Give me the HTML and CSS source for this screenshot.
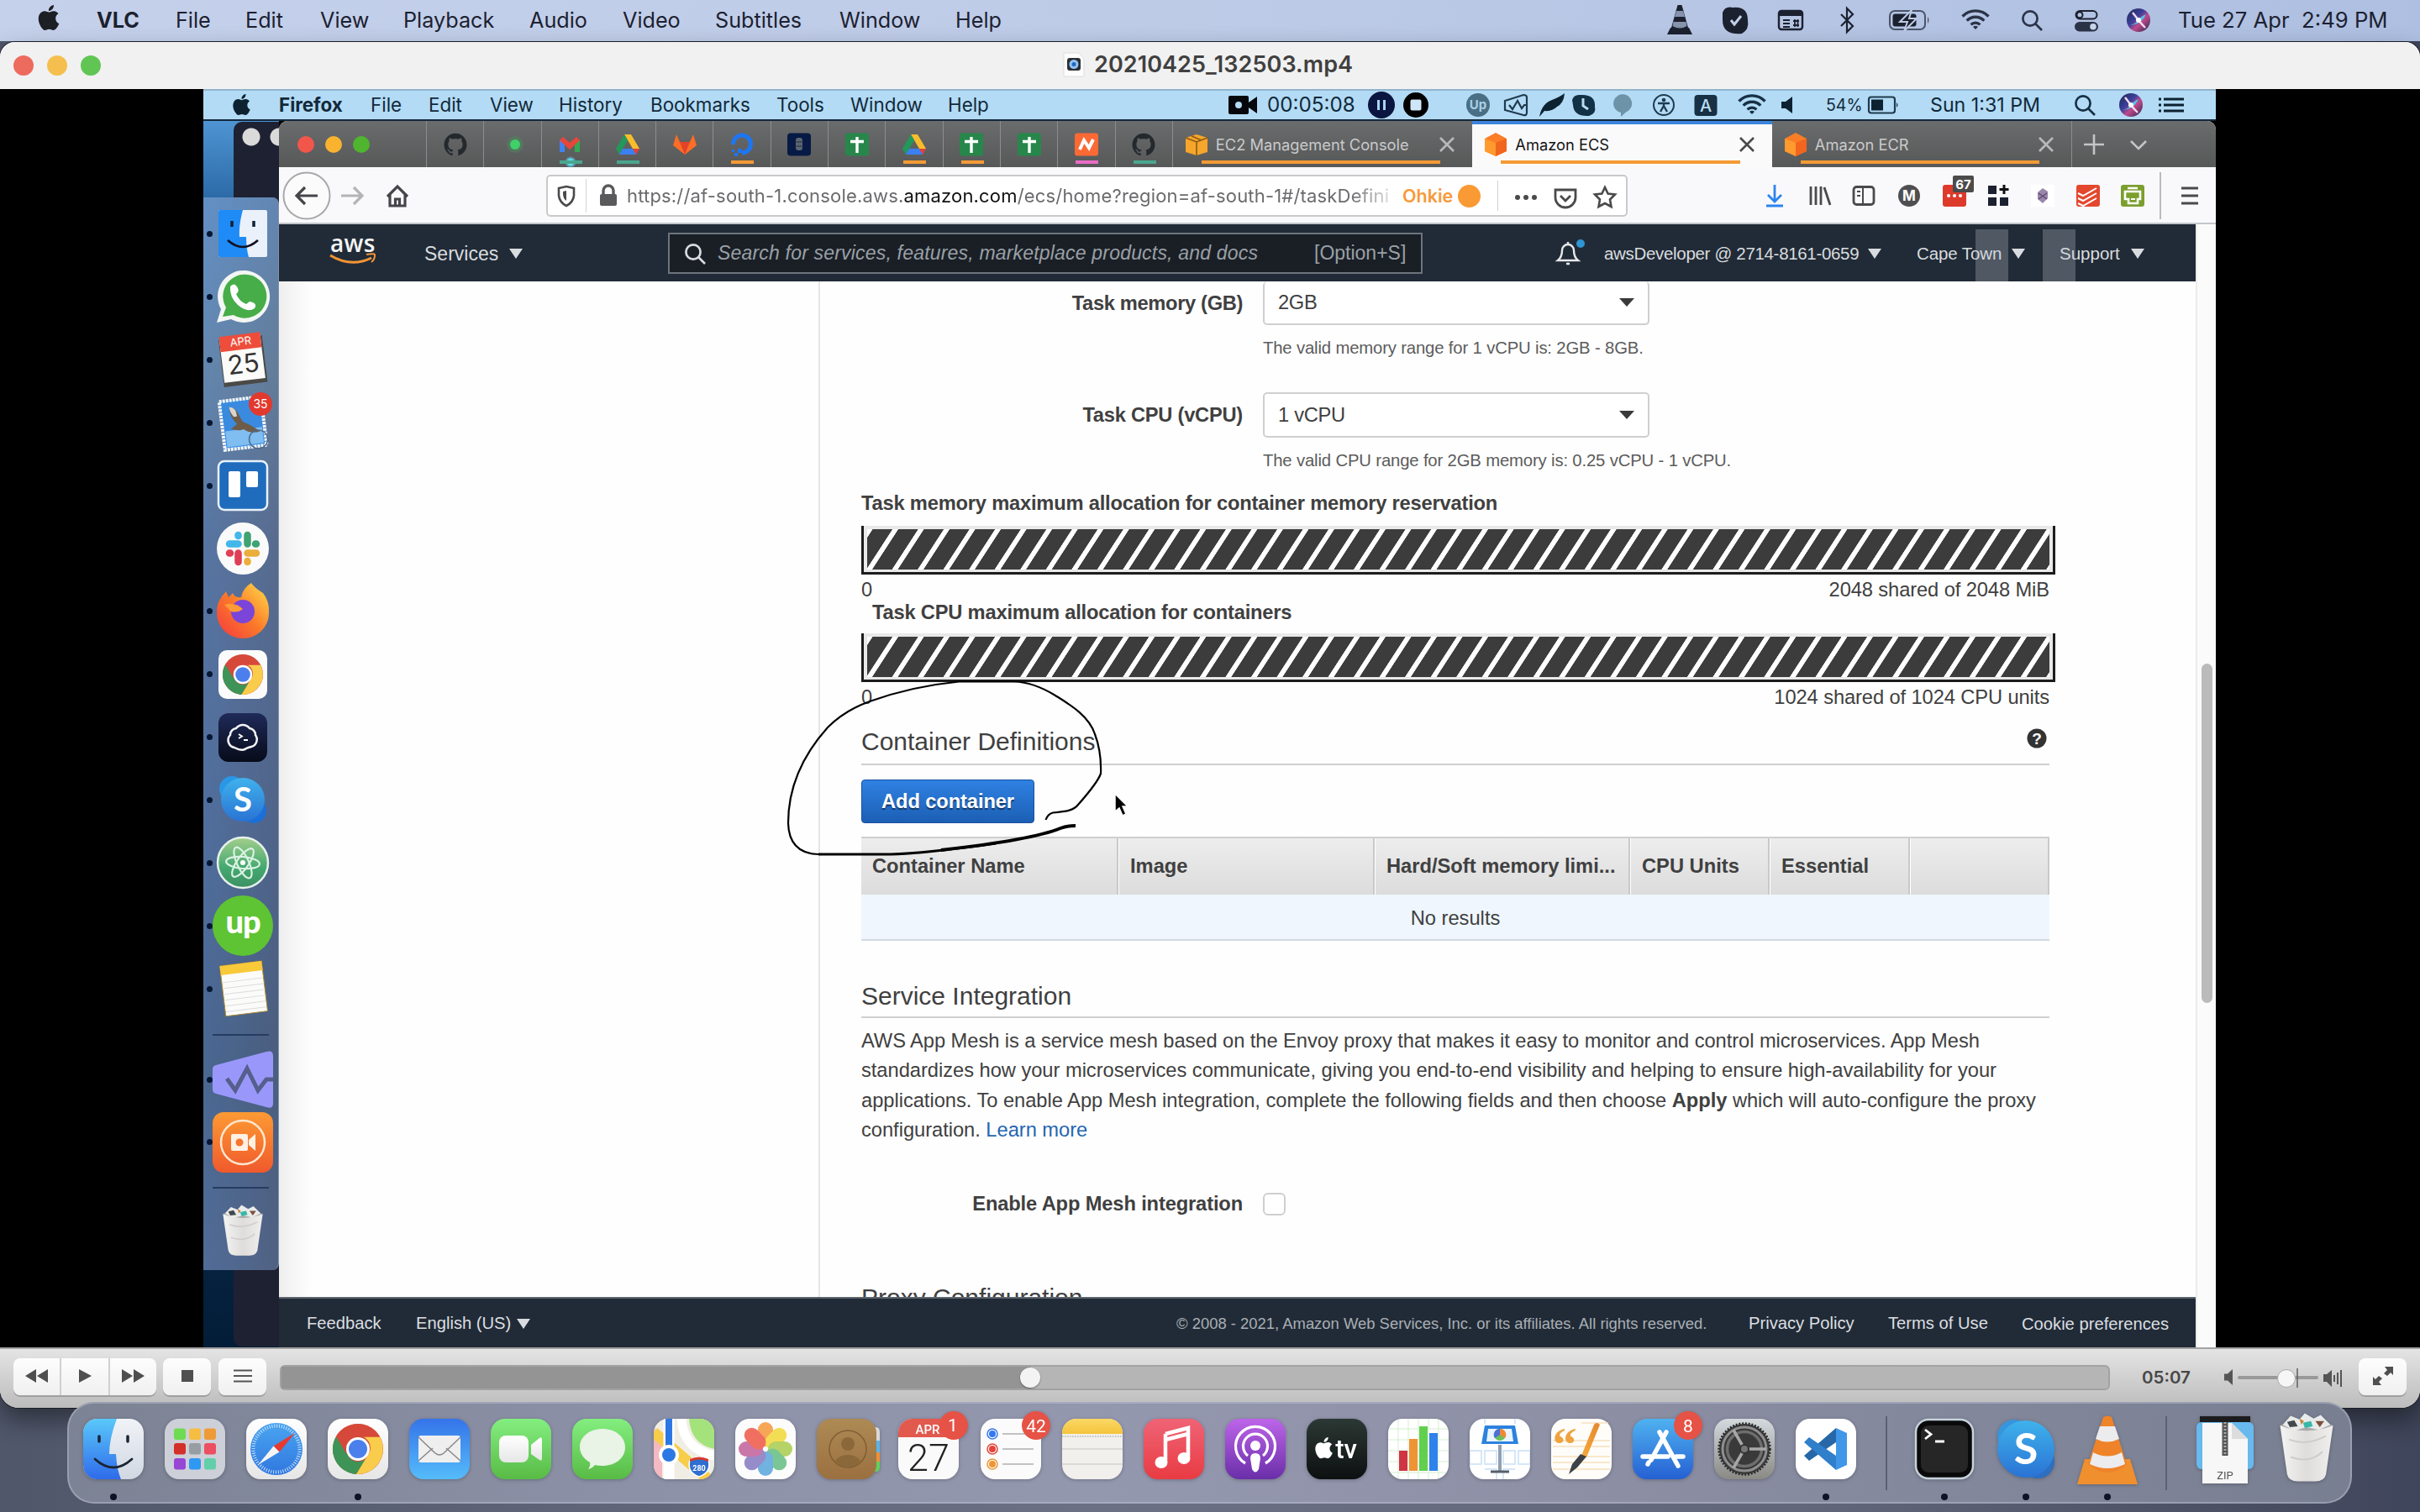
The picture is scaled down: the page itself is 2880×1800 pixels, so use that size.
FILE: index.html
```html
<!DOCTYPE html>
<html lang="en">
<head>
<meta charset="utf-8">
<title>20210425_132503.mp4</title>
<link rel="stylesheet" href="styles.css">
</head>
<body>
<svg class="defs" aria-hidden="true">
  <defs>
    <linearGradient id="gBlue" x1="0" y1="0" x2="0" y2="1"><stop offset="0" stop-color="#5ac8fa"/><stop offset="1" stop-color="#2f6bea"/></linearGradient>
    <linearGradient id="gMail" x1="0" y1="0" x2="0" y2="1"><stop offset="0" stop-color="#3574ea"/><stop offset="1" stop-color="#55bcfa"/></linearGradient>
    <linearGradient id="gSafari" x1="0" y1="0" x2="0" y2="1"><stop offset="0" stop-color="#4aa5f0"/><stop offset="1" stop-color="#3077e0"/></linearGradient>
    <linearGradient id="gGreen" x1="0" y1="0" x2="0" y2="1"><stop offset="0" stop-color="#83ee80"/><stop offset="1" stop-color="#58bb45"/></linearGradient>
    <linearGradient id="gWhite" x1="0" y1="0" x2="0" y2="1"><stop offset="0" stop-color="#fff"/><stop offset="1" stop-color="#e6e6e6"/></linearGradient>
    <linearGradient id="gSilver" x1="0" y1="0" x2="0" y2="1"><stop offset="0" stop-color="#f0f3f7"/><stop offset="1" stop-color="#d1d8e2"/></linearGradient>
    <linearGradient id="gBrown" x1="0" y1="0" x2="0" y2="1"><stop offset="0" stop-color="#ad8a54"/><stop offset="1" stop-color="#9b7040"/></linearGradient>
    <linearGradient id="gMusic" x1="0" y1="0" x2="0" y2="1"><stop offset="0" stop-color="#ef6475"/><stop offset="1" stop-color="#e93b43"/></linearGradient>
    <linearGradient id="gPod" x1="0" y1="0" x2="0" y2="1"><stop offset="0" stop-color="#bd65e9"/><stop offset="1" stop-color="#6a2ea9"/></linearGradient>
    <linearGradient id="gTv" x1="0" y1="0" x2="0" y2="1"><stop offset="0" stop-color="#2b3834"/><stop offset="1" stop-color="#0d1010"/></linearGradient>
    <linearGradient id="gStore" x1="0" y1="0" x2="0" y2="1"><stop offset="0" stop-color="#4fb2f0"/><stop offset="1" stop-color="#2560d3"/></linearGradient>
    <linearGradient id="gPref" x1="0" y1="0" x2="0" y2="1"><stop offset="0" stop-color="#d3dade"/><stop offset="1" stop-color="#8a8985"/></linearGradient>
    <linearGradient id="gSky" x1="0" y1="0" x2="0" y2="1"><stop offset="0" stop-color="#3fb2ec"/><stop offset="1" stop-color="#2a73d4"/></linearGradient>
    <linearGradient id="gOrange" x1="0" y1="0" x2="0" y2="1"><stop offset="0" stop-color="#fd9a33"/><stop offset="1" stop-color="#f0592c"/></linearGradient>
    <linearGradient id="gAtom" x1="0" y1="0" x2="0" y2="1"><stop offset="0" stop-color="#a3cf8c"/><stop offset=".6" stop-color="#44a870"/><stop offset="1" stop-color="#3c9063"/></linearGradient>
    <linearGradient id="gFox" x1="0" y1="1" x2="1" y2="0"><stop offset="0" stop-color="#f5373f"/><stop offset=".5" stop-color="#fb7a2a"/><stop offset="1" stop-color="#ffe24a"/></linearGradient>
    <linearGradient id="gTermius" x1="0" y1="0" x2="0" y2="1"><stop offset="0" stop-color="#1f2a58"/><stop offset="1" stop-color="#070b1a"/></linearGradient>
    <linearGradient id="gNotes" x1="0" y1="0" x2="0" y2="1"><stop offset="0" stop-color="#fbd865"/><stop offset="1" stop-color="#f4c43c"/></linearGradient>
    <linearGradient id="gPen" x1="1" y1="0" x2="0" y2="1"><stop offset="0" stop-color="#e8862a"/><stop offset="1" stop-color="#f5ab3c"/></linearGradient>
    <linearGradient id="gCan" x1="0" y1="0" x2="1" y2="0"><stop offset="0" stop-color="#f4f4f2"/><stop offset=".5" stop-color="#dedddb"/><stop offset="1" stop-color="#f0efed"/></linearGradient>
    <linearGradient id="gSiri" x1="0" y1="0" x2="1" y2="1"><stop offset="0" stop-color="#23264f"/><stop offset=".4" stop-color="#3a3f9a"/><stop offset=".6" stop-color="#c04a8c"/><stop offset="1" stop-color="#22264a"/></linearGradient>
    <clipPath id="cSq"><rect x="-36" y="-36" width="72" height="72" rx="17"/></clipPath>
    <clipPath id="cFlat"><rect x="-29" y="-28" width="58" height="56" rx="2"/></clipPath>

    <g id="apple"><path d="M12.152 6.896c-.948 0-2.415-1.078-3.96-1.04-2.04.027-3.91 1.183-4.961 3.014-2.117 3.675-.546 9.103 1.519 12.09 1.013 1.454 2.208 3.09 3.792 3.039 1.52-.065 2.09-.987 3.935-.987 1.831 0 2.35.987 3.96.948 1.637-.026 2.676-1.48 3.676-2.948 1.156-1.688 1.636-3.325 1.662-3.415-.039-.013-3.182-1.221-3.22-4.857-.026-3.04 2.48-4.494 2.597-4.559-1.429-2.09-3.623-2.324-4.39-2.376-2-.156-3.675 1.09-4.61 1.09zM15.53 3.83c.843-1.012 1.4-2.427 1.245-3.83-1.207.052-2.662.805-3.532 1.818-.78.896-1.454 2.338-1.273 3.714 1.338.104 2.715-.688 3.559-1.701"/></g>
    <g id="github" transform="translate(-13.5 -13.5) scale(1.125)"><path fill="#24292e" d="M12 .297c-6.63 0-12 5.373-12 12 0 5.303 3.438 9.8 8.205 11.385.6.113.82-.258.82-.577 0-.285-.01-1.04-.015-2.04-3.338.724-4.042-1.61-4.042-1.61C4.422 18.07 3.633 17.7 3.633 17.7c-1.087-.744.084-.729.084-.729 1.205.084 1.838 1.236 1.838 1.236 1.07 1.835 2.809 1.305 3.495.998.108-.776.417-1.305.76-1.605-2.665-.3-5.466-1.332-5.466-5.93 0-1.31.465-2.38 1.235-3.22-.135-.303-.54-1.523.105-3.176 0 0 1.005-.322 3.3 1.23.96-.267 1.98-.399 3-.405 1.02.006 2.04.138 3 .405 2.28-1.552 3.285-1.23 3.285-1.23.645 1.653.24 2.873.12 3.176.765.84 1.23 1.91 1.23 3.22 0 4.61-2.805 5.625-5.475 5.92.42.36.81 1.096.81 2.22 0 1.606-.015 2.896-.015 3.286 0 .315.21.69.825.57C20.565 22.092 24 17.592 24 12.297c0-6.627-5.373-12-12-12"/></g>
    <g id="wifi" fill="none" stroke="currentColor" stroke-width="3.4"><path d="M-15.500-4.500A21.500 21.500 0 0 1 15.500-4.500M-10.300.6A14.500 14.500 0 0 1 10.300.6M-5.400 5.400A7.600 7.600 0 0 1 5.400 5.400"/><path d="M-3 8 0 11 3 8A4 4 0 0 0-3 8Z" fill="currentColor" stroke="none"/></g>
    <g id="search" fill="none" stroke="currentColor" stroke-width="2.7"><circle cx="-2" cy="-2" r="8.600"/><path d="M4.500 4.500 12 12"/></g>
    <g id="siri"><circle r="14" fill="url(#gSiri)"/><path d="M-10 6Q-2 4 0 0T9-7Q4 5-10 6Z" fill="#54c3ee"/><path d="M-7-9Q-3-4 0 0T8 9" stroke="#f3dcf2" stroke-width="2.400" fill="none"/><circle r="3" fill="#fff"/></g>
    <g id="drive"><path d="M-4-12H4L14 5H6Z" fill="#f9bd2b"/><path d="M-4-12-14 5-10 12 0-5Z" fill="#23985a"/><path d="M-10 12H10L14 5H-6Z" fill="#3c7ff0"/><path d="M10 12 14 5H6Z" fill="#e44034"/></g>
    <g id="sheet"><rect x="-14" y="-13.500" width="28" height="27" rx="3" fill="#27874b"/><path d="M0-9V10M-8-3.500H8" stroke="#fff" stroke-width="3.400"/></g>
    <g id="cube"><path d="M-13-7 0-14 13-7V8L0 14-13 8Z" fill="#fb7d26"/><path d="M-13-7 0-2V14L-13 8Z" fill="#ff9a2e"/><path d="M0-2 13-7V8L0 14Z" fill="#f2651f"/></g>
    <g id="chrome"><circle r="30" fill="#d6483a"/><path d="M-26-15A30 30 0 0 0-2 30L12 7A13 13 0 0 1-12 7Z" fill="#3e9457"/><path d="M26-14.500A30 30 0 0 1-2 30L12 7A14 14 0 0 0 6-14.500Z" fill="#f9cd4b"/><path d="M-26-15-13 7A15 15 0 0 1 0-14.500H26A30 30 0 0 0-26-15Z" fill="#d6483a"/><circle r="14" fill="#fff"/><circle r="11" fill="#4b80ec"/></g>
    <g id="bin"><path d="M-30-26H30L22 30Q20 38 10 38H-10Q-20 38-22 30Z" fill="url(#gCan)"/><path d="M-30-26Q0-40 30-26 0-14-30-26Z" fill="#aaa"/><path d="M-27-27-18-37-8-33-2-40 8-34 16-38 27-27 14-21 0-24-14-20Z" fill="#e9ebea"/><path d="M-22-30-14-32-10-25-19-24Z" fill="#43494d"/><path d="M-4-29 5-31 7-25-2-23Z" fill="#36b8a8"/><path d="M10-31 20-31 15-24Z" fill="#7d4f3b"/><path d="M-8-34-3-31-6-27Z" fill="#c68238"/><path d="M-20-10Q0-2 22-14M-18 10Q4 18 18 4" stroke="#cfcdca" stroke-width="2" fill="none"/></g>
  </defs>
</svg>

<header class="menubar">
  <nav class="menubar-left">
    <svg class="apple-logo" viewBox="0 0 24 24"><use href="#apple"/></svg>
    <b>VLC</b><span>File</span><span>Edit</span><span>View</span><span>Playback</span><span>Audio</span><span>Video</span><span>Subtitles</span><span>Window</span><span>Help</span>
  </nav>
  <div class="menubar-right">
    <svg class="i" viewBox="-20 -20 40 40"><path d="M-11 9H11L15 17H-15Z" fill="#1c2130"/><path d="M-2.500-18H2.500L10 9H-10Z" fill="#1c2130"/><path d="M-4-11H4L6-4H-6ZM-7.500 2H7.500L8.500 7Q0 12-8.500 7Z" fill="#8793ad"/></svg>
    <svg class="i" viewBox="-20 -20 40 40"><path d="M-15-9Q-12-17-3-15 15-17 15 0 17 11 8 16-15 18-15 0Z"/><path d="M-5 0-1 5 7-5" fill="none" stroke="#c3d0e9" stroke-width="3"/></svg>
    <svg class="i" viewBox="-20 -20 40 40"><rect x="-14" y="-11" width="28" height="22" rx="3" fill="none" stroke="#1c2130" stroke-width="2.400"/><path d="M-14-11H14V-5H-14Z"/><path d="M-9 0H-1M-9 4H-1M-9 8H-1M3 1H10M3 6H10M5-1V8M8.500-1V8" stroke="#1c2130" stroke-width="1.800"/></svg>
    <svg class="i" viewBox="-20 -20 40 40"><path d="M-7-7 7 7 0 14V-14L7-7-7 7" fill="none" stroke="#1c2130" stroke-width="2.200"/></svg>
    <svg class="i i-wide" viewBox="-26 -20 52 40"><rect x="-22" y="-11" width="42" height="22" rx="6" fill="none" stroke="#4b5468" stroke-width="2"/><rect x="-18.500" y="-7.500" width="28" height="15" rx="3"/><path d="M23-4Q26 0 23 4Z" fill="#4b5468"/><path d="M4-12-10 2H-1L-5 13 10-2H1Z" stroke="#bccae4" stroke-width="2"/></svg>
    <svg class="i" viewBox="-20 -20 40 40"><use href="#wifi"/></svg>
    <svg class="i" viewBox="-20 -20 40 40"><use href="#search"/></svg>
    <svg class="i" viewBox="-20 -20 40 40"><rect x="-12.500" y="-11" width="25" height="9.500" rx="4.700" fill="none" stroke="#1c2130" stroke-width="2"/><circle cx="-8" cy="-6.200" r="3.500" fill="none" stroke="#1c2130" stroke-width="2"/><rect x="-14" y="2" width="28" height="11.500" rx="5.700" fill="#2b3347"/><circle cx="8" cy="7.700" r="3.800" fill="#c8d4ea"/></svg>
    <svg class="i" viewBox="-20 -20 40 40"><use href="#siri"/></svg>
    <span class="clock">Tue 27 Apr&nbsp; 2:49 PM</span>
  </div>
</header>

<main class="player">
  <div class="titlebar">
    <div class="lights"><i class="red"></i><i class="yellow"></i><i class="green"></i></div>
    <div class="title">
      <svg class="file-icon" viewBox="0 0 24 30"><path d="M0 1H18L24 8V29H0Z" fill="#fdfdfd" stroke="#ddd"/><rect x="4" y="7" width="16" height="15" rx="3" fill="#2b2e33"/><circle cx="12" cy="14.500" r="5.500" fill="#8fc4f3"/><circle cx="12" cy="14.500" r="2.500" fill="#2467c4"/></svg>
      <span>20210425_132503.mp4</span>
    </div>
  </div>

  <div class="stage">
    <div class="video">
      <div class="mac-bar">
        <nav class="mac-menus">
          <svg class="mac-apple" viewBox="0 0 24 24"><use href="#apple"/></svg>
          <b>Firefox</b><span>File</span><span>Edit</span><span>View</span><span>History</span><span>Bookmarks</span><span>Tools</span><span>Window</span><span>Help</span>
        </nav>
        <div class="mac-status">
          <svg class="i" viewBox="-20 -20 40 40"><rect x="-17" y="-11" width="24" height="22" rx="2" fill="#05070c"/><path d="M7-3 17-10V10L7 3Z" fill="#05070c"/><circle cx="-5" r="4" fill="#b5daf2"/></svg>
          <span class="rec">00:05:08</span>
          <svg class="i" viewBox="-20 -20 40 40"><circle r="16" fill="#0a1540"/><path d="M-3.500-6V6M3.500-6V6" stroke="#a8d4f3" stroke-width="3"/></svg>
          <svg class="i" viewBox="-20 -20 40 40"><circle r="15" fill="#000"/><rect x="-6.500" y="-6.500" width="13" height="13" rx="2" fill="#cfe6f6"/></svg>
          <svg class="i" viewBox="-20 -20 40 40"><circle r="14" fill="#4a6f85"/><text y="5" class="t-up">Up</text></svg>
          <svg class="i" viewBox="-20 -20 40 40"><g fill="none" stroke="#1f3a4f" stroke-width="2.200"><path d="M-13-5 9-12Q13-12 13-9V9Q13 13 9 12L-13 6Z"/><path d="M-8 0-4 5 2-5 7 4 10 0H13"/></g></svg>
          <svg class="i" viewBox="-20 -20 40 40"><path d="M-15 14Q-12-2 0-6 10-10 15-14 14-2 6 2 0 8-9 7Z" fill="#0c2231"/></svg>
          <svg class="i" viewBox="-20 -20 40 40"><path d="M-14-6Q-12-13-4-12 14-13 13 2 15 10 6 13-12 14-13 0Z" fill="#123046"/><path d="M-1-8V1L5 5" stroke="#b8dbf2" stroke-width="3" fill="none"/></svg>
          <svg class="i" viewBox="-20 -20 40 40"><path d="M-2 14V9A11 11 0 1 1 4 8.500Z" fill="#6d93a9"/></svg>
          <svg class="i" viewBox="-20 -20 40 40"><circle r="12" fill="none" stroke="#1f3a4f" stroke-width="2"/><circle cy="-6" r="2.300" fill="#1f3a4f"/><path d="M-7-2H7M0-2V2M0 1-4 8M0 1 4 8" stroke="#1f3a4f" stroke-width="2.400"/></svg>
          <svg class="i" viewBox="-20 -20 40 40"><rect x="-13.500" y="-12" width="27" height="25" rx="4" fill="#173044"/><text y="7.500" class="t-a">A</text></svg>
          <svg class="i ink" viewBox="-20 -20 40 40"><use href="#wifi"/></svg>
          <svg class="i" viewBox="-20 -20 40 40"><path d="M-8-4H-3L5-10V10L-3 4H-8Z" fill="#0c2231"/></svg>
          <span class="pct">54%</span>
          <svg class="i" viewBox="-20 -20 40 40"><rect x="-17" y="-9.500" width="31" height="19" rx="3" fill="none" stroke="#1f3a4f" stroke-width="2.200"/><rect x="-14" y="-6.500" width="14" height="13" fill="#0c2231"/><path d="M16-3Q19 0 16 3Z" fill="#1f3a4f"/></svg>
          <span class="mac-clock">Sun 1:31 PM</span>
          <svg class="i ink" viewBox="-20 -20 40 40"><use href="#search"/></svg>
          <svg class="i" viewBox="-20 -20 40 40"><use href="#siri"/></svg>
          <svg class="i" viewBox="-20 -20 40 40"><path d="M-9-7H15M-9 0H15M-9 7H15" stroke="#0c2231" stroke-width="3"/><path d="M-15-7H-12M-15 0H-12M-15 7H-12" stroke="#0c2231" stroke-width="3"/></svg>
        </div>
      </div>

      <div class="desk">
        <aside class="side">
          <div class="back-window"></div>
          <div class="side-dock">
            <div class="app on"><svg viewBox="-36 -36 72 72"><rect x="-29" y="-28" width="58" height="56" rx="2" fill="#eaf1fa"/><path clip-path="url(#cFlat)" d="M-36-28H0Q-5-10-4 4H4Q4 18 7 28H-36Z" fill="#1f8bf6"/><path d="M-13-15V-8M13-15V-8" stroke="#123" stroke-width="3.500"/><path d="M-18 8Q0 24 18 8" stroke="#112" stroke-width="2.600" fill="none"/></svg></div>
            <div class="app on"><svg viewBox="-36 -36 72 72"><path d="M-31 31-26 15A31 31 0 1 1-14 27Z" fill="#f3f6f3"/><path d="M-24 24-20 13A26 26 0 1 1-11 22Z" fill="#46ad48"/><path d="M-15-12Q-10-18-6-10-4-6-8-3-4 6 4 9L8 6Q18 8 14 14 6 20-6 10-16 1-15-12Z" fill="#fff"/></svg></div>
            <div class="app on"><svg viewBox="-36 -36 72 72"><g transform="rotate(-7)"><rect x="-26" y="-26" width="52" height="56" fill="#4a4a46"/><rect x="-25" y="-27" width="49" height="52" fill="#fbfbfa"/><rect x="-25" y="-30" width="49" height="18" fill="#ee4d3b"/><text y="-17" class="t-apr">APR</text><text y="16" class="t-25">25</text></g></svg></div>
            <div class="app on"><svg viewBox="-36 -36 72 72"><g transform="rotate(-7)"><rect x="-25" y="-28" width="50" height="58" fill="#3a8be0" stroke="#f5f7f8" stroke-width="4" stroke-dasharray="3 1"/><rect x="-22" y="-25" width="44" height="52" fill="#3a8be0"/><path d="M-22 8H22V27H-22Z" fill="#80bdf0"/><path d="M-14-20Q-6-20-3-8L0-1Q10 4 19 13 8 15 0 8-6 10-15 6-10 3-7 1-15-8-14-20Z" fill="#6e5c48"/><path d="M-14-20Q-6-20-6-8L-10-8Q-14-14-14-20Z" fill="#d8d5cf"/><circle cx="16" cy="22" r="11" fill="none" stroke="#4d6a8c" stroke-width="1.500"/></g><circle cx="21" cy="-22" r="14" fill="#e2392e"/><text x="21" y="-17" class="t-35">35</text></svg></div>
            <div class="app on"><svg viewBox="-36 -36 72 72"><rect x="-29" y="-29" width="58" height="58" rx="7" fill="#1f6cbd" stroke="#e8f1fa" stroke-width="2.500"/><rect x="-17" y="-17" width="14" height="31" rx="2" fill="#fff"/><rect x="4" y="-17" width="14" height="19" rx="2" fill="#fff"/></svg></div>
            <div class="app"><svg viewBox="-36 -36 72 72"><circle r="31" fill="#fafafa"/><g stroke-linecap="round" stroke-width="8.500"><path d="M-16-5.500H-5.500M-5.500-16V-15" stroke="#43b7ea"/><path d="M5.500-16V-5.500M16-5.500H15" stroke="#3fa373"/><path d="M16 5.500H5.500M5.500 16V15" stroke="#ebae3d"/><path d="M-5.500 16V5.500M-16 5.500H-15" stroke="#df3f56"/></g></svg></div>
            <div class="app on"><svg viewBox="-36 -36 72 72"><path d="M10-34Q14-28 24-22 32-12 31 2A31 30 0 0 1-31 2Q-32-12-20-24L-17-17-12-22Q-10-16-2-17 0-28 10-34Z" fill="url(#gFox)"/><circle cy="0" r="14" fill="#7a45d8"/><path d="M-22-8Q-10-12 0-3-6 2-14 0Z" fill="#fd9b36"/></svg></div>
            <div class="app on"><svg viewBox="-36 -36 72 72"><rect x="-29" y="-29" width="58" height="58" rx="10" fill="#fbfbfb"/><use href="#chrome" transform="scale(.8)"/></svg></div>
            <div class="app on"><svg viewBox="-36 -36 72 72"><rect x="-29" y="-29" width="58" height="58" rx="12" fill="url(#gTermius)"/><path d="M-10 12A9 9 0 0 1-15-3 8 8 0 0 1-8-11 10 10 0 0 1 8-11 8 8 0 0 1 15-3 9 9 0 0 1 10 11Q6 12 4 13 0 17-10 12Z" fill="none" stroke="#f4f4f8" stroke-width="2.500"/><path d="M-5-4-1-1.500-5 1M1 3H6" stroke="#fff" stroke-width="1.800" fill="none"/></svg></div>
            <div class="app on"><svg viewBox="-36 -36 72 72"><circle cx="-13" cy="-13" r="15" fill="#2a97e6"/><circle cx="13" cy="13" r="15" fill="#1b6fd8"/><circle r="26" fill="url(#gSky)"/><text y="14" class="t-skype">S</text></svg></div>
            <div class="app on"><svg viewBox="-36 -36 72 72"><circle r="30" fill="url(#gAtom)" stroke="#e6f1ea" stroke-width="2.500"/><g fill="none" stroke="#d9f2e2" stroke-width="2.200"><ellipse rx="20" ry="7" transform="rotate(5)"/><ellipse rx="20" ry="7" transform="rotate(65)"/><ellipse rx="20" ry="7" transform="rotate(125)"/></g><circle r="3" fill="#fff"/></svg></div>
            <div class="app on"><svg viewBox="-36 -36 72 72"><circle r="36" fill="#5ec433"/><text y="9" class="t-upwork">up</text></svg></div>
            <div class="app on"><svg viewBox="-36 -36 72 72"><g transform="rotate(-7)"><rect x="-24" y="-30" width="50" height="60" fill="#fbfbfa" stroke="#b08b2c"/><rect x="-24" y="-30" width="50" height="11" fill="#f8c939"/><path d="M-23-10H25M-23-3H25M-23 4H25M-23 11H25M-23 18H25M-23 25H25" stroke="#dcdcdc"/></g></svg></div>
            <div class="rule"></div>
            <div class="app on"><svg viewBox="-36 -36 72 72"><path d="M-36-12Q-36-16-32-17L28-33Q36-35 36-28V28Q36 36 28 33L-32 17Q-36 16-36 12Z" fill="#9a97fb"/><path d="M-19-1-9 13 5-13 18 13 28 0H36" fill="none" stroke="#555f8d" stroke-width="5"/></svg></div>
            <div class="app on"><svg viewBox="-36 -36 72 72"><rect x="-36" y="-36" width="72" height="72" rx="13" fill="url(#gOrange)"/><circle r="26" fill="none" stroke="#ffe7cf" stroke-width="2.500"/><rect x="-14" y="-10" width="20" height="20" rx="2" fill="#fff1e4"/><path d="M7-3 15-10V10L7 3Z" fill="#fff1e4"/><circle cx="-4" r="4.500" fill="#f8752f"/></svg></div>
            <div class="rule"></div>
            <div class="app"><svg viewBox="-40 -42 80 84"><use href="#bin" transform="translate(0 -3) scale(.92 .9)"/></svg></div>
          </div>
        </aside>

        <section class="browser">
          <div class="tabs">
            <div class="lights small"><i class="red"></i><i class="yellow"></i><i class="green"></i></div>
            <div class="pin"><svg class="i" viewBox="-20 -20 40 40"><use href="#github"/></svg></div>
            <div class="pin"><svg class="i" viewBox="-20 -20 40 40"><circle cx="3" r="10" fill="#4c8a5e" opacity=".5"/><circle cx="3" r="6" fill="#3fd068"/></svg></div>
            <div class="pin teal spark"><svg class="i" viewBox="-20 -20 40 40"><path d="M-9 9V-6" stroke="#4182ee" stroke-width="6"/><path d="M9 9V-6" stroke="#34a853" stroke-width="6"/><path d="M-10-7 0 2 10-7" fill="none" stroke="#e8463a" stroke-width="6"/></svg></div>
            <div class="pin teal"><svg class="i" viewBox="-20 -20 40 40"><use href="#drive"/></svg></div>
            <div class="pin"><svg class="i" viewBox="-20 -20 40 40"><path d="M-14 1-10-12-6-3H6L10-12 14 1 0 12Z" fill="#fc6d26"/><path d="M-6-3H6L0 12Z" fill="#e2432a"/></svg></div>
            <div class="pin amber"><svg class="i" viewBox="-20 -20 40 40"><path d="M0 10A10.500 10.500 0 1 0-10.500 0" fill="none" stroke="#1d76f2" stroke-width="5"/><path d="M-5 5H0V10H-5ZM-9 10H-5V14H-9ZM-12 6H-9V9H-12Z" fill="#1d76f2"/></svg></div>
            <div class="pin"><svg class="i" viewBox="-20 -20 40 40"><rect x="-14" y="-13.500" width="28" height="27" rx="4" fill="#071a45"/><rect x="-4" y="-8" width="8" height="15" rx="3" fill="#5d6670"/><path d="M-5-3H5M-5 2H5" stroke="#222c44"/></svg></div>
            <div class="pin"><svg class="i" viewBox="-20 -20 40 40"><use href="#sheet"/></svg></div>
            <div class="pin amber"><svg class="i" viewBox="-20 -20 40 40"><use href="#drive"/></svg></div>
            <div class="pin amber"><svg class="i" viewBox="-20 -20 40 40"><use href="#sheet"/></svg></div>
            <div class="pin"><svg class="i" viewBox="-20 -20 40 40"><use href="#sheet"/></svg></div>
            <div class="pin pink"><svg class="i" viewBox="-20 -20 40 40"><rect x="-14" y="-13.500" width="28" height="27" rx="3" fill="#fb6a35"/><path d="M-8 6-3-5 3 4 8-6" fill="none" stroke="#fff" stroke-width="4"/></svg></div>
            <div class="pin teal"><svg class="i" viewBox="-20 -20 40 40"><use href="#github"/></svg></div>
            <div class="tab"><svg class="i" viewBox="-20 -20 40 40"><path d="M-13-8 0-12 13-8V9L0 13-13 9Z" fill="#f5a62b"/><path d="M-13-8 0-3 13-8M0-3V13M-6-10 6-5" stroke="#8d5a14" stroke-width="1.600" fill="none"/></svg><span>EC2 Management Console</span><svg class="i x" viewBox="-20 -20 40 40"><path d="M-8-8 8 8M8-8-8 8"/></svg></div>
            <div class="tab current"><svg class="i" viewBox="-20 -20 40 40"><use href="#cube"/></svg><span>Amazon ECS</span><svg class="i x" viewBox="-20 -20 40 40"><path d="M-8-8 8 8M8-8-8 8"/></svg></div>
            <div class="tab"><svg class="i" viewBox="-20 -20 40 40"><use href="#cube"/></svg><span>Amazon ECR</span><svg class="i x" viewBox="-20 -20 40 40"><path d="M-8-8 8 8M8-8-8 8"/></svg></div>
            <div class="tab-tools"><svg class="i" viewBox="-20 -20 40 40"><path d="M-12 0H12M0-12V12"/></svg><svg class="i" viewBox="-20 -20 40 40"><path d="M-9-4 0 5 9-4"/></svg></div>
          </div>

          <div class="toolbar">
            <div class="nav-buttons">
              <svg viewBox="-30 -30 60 60" class="nb"><circle r="27.500" fill="#fbfbfc" stroke="#a9a9ab" stroke-width="2"/><path d="M13 0H-11M-2-10-12 0-2 10" class="ln"/></svg>
              <svg viewBox="-30 -30 60 60" class="nb"><path d="M-13 0H11M2-10 12 0 2 10" class="ln dim"/></svg>
              <svg viewBox="-30 -30 60 60" class="nb"><path d="M-12 1 0-11 12 1M-9-1V12H9V-1M-2.500 12V4H2.500V12" class="ln"/></svg>
            </div>
            <div class="urlbar">
              <svg class="i shield" viewBox="-20 -20 40 40"><path d="M0-11 9-9V0Q8 8 0 12-8 8-9 0V-9Z" fill="none" stroke="#4a4a4c" stroke-width="2.600"/><path d="M0-6V6Q-4 3-4-2V-5Z" fill="#4a4a4c"/></svg>
              <svg class="i lock" viewBox="-20 -20 40 40"><rect x="-10" y="-2" width="20" height="14" rx="2" fill="#5a5a5c"/><path d="M-6-2V-6A6 6 0 0 1 6-6V-2" fill="none" stroke="#5a5a5c" stroke-width="3.400"/></svg>
              <span class="url">https://af-south-1.console.aws.<em>amazon.com</em>/ecs/home?region=af-south-1#/taskDefini</span>
              <span class="container-name">Ohkie</span><i class="container-dot"></i>
              <div class="url-tools">
                <svg class="i" viewBox="-20 -20 40 40"><circle cx="-10" r="3"/><circle r="3"/><circle cx="10" r="3"/></svg>
                <svg class="i" viewBox="-20 -20 40 40"><path d="M-12-9H12V0A12 12 0 0 1-12 0Z" fill="none" stroke="#4a4a4c" stroke-width="2.800"/><path d="M-6-2 0 4 6-2" fill="none" stroke="#4a4a4c" stroke-width="2.800"/></svg>
                <svg class="i" viewBox="-20 -20 40 40"><path d="M0-12 3.600-4.500 12-3.500 6 2.500 7.500 11 0 7-7.500 11-6 2.500-12-3.500-3.600-4.500Z" fill="none" stroke="#4a4a4c" stroke-width="2.600"/></svg>
              </div>
            </div>
            <div class="extensions">
              <svg class="i" viewBox="-20 -20 40 40"><path d="M0-13V6M-8-1 0 7 8-1M-10 12H10" fill="none" stroke="#2b84ef" stroke-width="2.800"/></svg>
              <svg class="i" viewBox="-20 -20 40 40"><path d="M-11-11V11M-5-11V11M1-11V11M5-10 12 11" stroke="#4a4a4c" stroke-width="2.800"/></svg>
              <svg class="i" viewBox="-20 -20 40 40"><rect x="-12" y="-10.500" width="24" height="21" rx="3.500" fill="none" stroke="#4a4a4c" stroke-width="2.800"/><path d="M-1-10V10M-8-5H-4M-8 0H-4" stroke="#4a4a4c" stroke-width="2"/></svg>
              <svg class="i" viewBox="-20 -20 40 40"><circle r="13" fill="#4f4f51"/><text y="6" class="t-m">M</text></svg>
              <svg class="i" viewBox="-20 -20 40 40"><rect x="-14" y="-13" width="28" height="26" rx="3" fill="#dd3a2b"/><circle cx="-7" r="2" fill="#fff"/><circle r="2" fill="#fff"/><circle cx="7" r="2" fill="#fff"/><rect x="-2" y="-24" width="25" height="20" rx="2" fill="#4b4b4b"/><text x="10.500" y="-8" class="t-67">67</text></svg>
              <svg class="i" viewBox="-20 -20 40 40"><rect x="-12" y="-12" width="10" height="10"/><rect x="-12" y="2" width="10" height="10"/><rect x="2" y="2" width="10" height="10"/><path d="M7-13V-2M1.500-7.500H12.500" stroke="#111" stroke-width="3"/></svg>
              <svg class="i" viewBox="-20 -20 40 40"><rect x="-14" y="-13" width="28" height="26" fill="#fff"/><path d="M0-9 6-5V3L0 9-6 4V-4Z" fill="#9a86ab"/><path d="M-5-3 5 4M5-3-5 4" stroke="#5f4c70" stroke-width="1.500"/></svg>
              <svg class="i" viewBox="-20 -20 40 40"><rect x="-14" y="-13" width="28" height="26" rx="3" fill="#e3472e"/><path d="M-12-3-6 0 10-9M-12 3-6 6 10-3M-12 9-6 12 10 3" stroke="#fff" stroke-width="2" fill="none"/></svg>
              <svg class="i" viewBox="-20 -20 40 40"><rect x="-14" y="-13" width="28" height="26" rx="3" fill="#7c9f2e"/><path d="M-9-5V4H-5V9H6V4H9V-5ZM-6-9H6" fill="none" stroke="#fff" stroke-width="2.600"/><path d="M-2 4H3" stroke="#fff" stroke-width="2"/></svg>
              <i class="vr"></i>
              <svg class="i" viewBox="-20 -20 40 40"><path d="M-10-9H10M-10 0H10M-10 9H10" stroke="#4a4a4c" stroke-width="2.800"/></svg>
            </div>
          </div>

          <div class="page">
            <div class="page-main">
              <div class="aws-nav">
                <div class="aws-logo"><span>aws</span><svg viewBox="0 0 56 14"><path d="M1 2Q26 17 50 5" fill="none" stroke="#f29436" stroke-width="3"/><path d="M44 1Q55-1 54 2 54 7 50 10" fill="none" stroke="#f29436" stroke-width="2"/></svg></div>
                <span class="services">Services</span><i class="tri"></i>
                <div class="aws-search">
                  <svg class="i" viewBox="-20 -20 40 40"><use href="#search"/></svg>
                  <span class="ph">Search for services, features, marketplace products, and docs</span>
                  <span class="kbd">[Option+S]</span>
                </div>
                <svg class="i bell" viewBox="-20 -20 40 40"><path d="M-12 8Q-7 4-7-4A7 7 0 0 1 7-4Q7 4 12 8ZM0-11V-14M-2 12H2" fill="none" stroke="#e6e8ea" stroke-width="2.400"/><circle cx="15" cy="-12" r="5" fill="#2f95d3"/></svg>
                <span class="account">awsDeveloper @ 2714-8161-0659</span><i class="tri"></i>
                <span class="region">Cape Town</span><i class="tri"></i>
                <span class="support">Support</span><i class="tri"></i>
                <div class="paused"><i></i><i></i></div>
              </div>

              <div class="content">
                <div class="form">
                  <div class="field first"><label>Task memory (GB)</label><div class="select">2GB<i class="caret"></i></div></div>
                  <p class="hint">The valid memory range for 1 vCPU is: 2GB - 8GB.</p>
                  <div class="field second"><label>Task CPU (vCPU)</label><div class="select">1 vCPU<i class="caret"></i></div></div>
                  <p class="hint">The valid CPU range for 2GB memory is: 0.25 vCPU - 1 vCPU.</p>

                  <div class="alloc-title">Task memory maximum allocation for container memory reservation</div>
                  <div class="alloc"><div></div></div>
                  <div class="alloc-legend"><span>0</span><span>2048 shared of 2048 MiB</span></div>
                  <div class="alloc-title inset">Task CPU maximum allocation for containers</div>
                  <div class="alloc"><div></div></div>
                  <div class="alloc-legend"><span>0</span><span>1024 shared of 1024 CPU units</span></div>

                  <h2 class="defs-title">Container Definitions <svg class="help" viewBox="-12 -12 24 24"><circle r="11.500" fill="#333"/><text y="7" class="t-help">?</text></svg></h2>
                  <button class="add">Add container</button>
                  <div class="table">
                    <div class="thead"><span>Container Name</span><span>Image</span><span>Hard/Soft memory limi...</span><span>CPU Units</span><span>Essential</span><span></span></div>
                    <div class="empty">No results</div>
                  </div>

                  <h2 class="service-title">Service Integration</h2>
                  <p class="copy"><span class="lead">AWS App Mesh is a service mesh based on the Envoy proxy that makes it easy to monitor and control microservices. App Mesh</span><br>standardizes how your microservices communicate, giving you end-to-end visibility and helping to ensure high-availability for your<br>applications. To enable App Mesh integration, complete the following fields and then choose <b>Apply</b> which will auto-configure the proxy<br>configuration. <a>Learn more</a></p>
                  <div class="field mesh"><label>Enable App Mesh integration</label><i class="checkbox"></i></div>
                  <h2 class="proxy-title">Proxy Configuration</h2>
                </div>
                <svg class="ink-note" viewBox="920 790 440 240"><path d="M1244.500 976Q1247 969 1253 967.500C1268 966 1278 965 1283 958Q1306 932 1310 921 1311 895 1303 874C1296 852 1272 838 1256 828Q1230 812 1207 811.500H1141Q1085 817 1035 835C1010 844 996 855 985 866 950 905 938 945 938 980Q939 1016 974 1017H1060" fill="none" stroke="#000" stroke-width="2.200"/><path d="M974 1017H1060Q1100 1016 1185 1004" fill="none" stroke="#000" stroke-width="3"/><path d="M1120 1012C1200 1003 1240 995 1262 986Q1270 983 1280 983" fill="none" stroke="#000" stroke-width="4"/><path d="M1327 945V966L1332 962 1336 971 1340 969 1336 960H1342Z" fill="#000" stroke="#fff" stroke-width="1.500"/></svg>
              </div>

              <footer class="aws-foot">
                <span class="f1">Feedback</span><span class="f2">English (US)</span><i class="tri"></i>
                <span class="f3">© 2008 - 2021, Amazon Web Services, Inc. or its affiliates. All rights reserved.</span>
                <span class="f4">Privacy Policy</span><span class="f5">Terms of Use</span><span class="f6">Cookie preferences</span>
              </footer>
            </div>
            <div class="scroll"><i></i></div>
          </div>
        </section>
      </div>
    </div>
  </div>

  <div class="controls">
    <div class="btn-group">
      <button class="btn"><svg class="i" viewBox="-20 -20 40 40"><path d="M-14 0-1-8V8ZM0 0 13-8V8Z"/></svg></button>
      <button class="btn"><svg class="i" viewBox="-20 -20 40 40"><path d="M-7-8 8 0-7 8Z"/></svg></button>
      <button class="btn"><svg class="i" viewBox="-20 -20 40 40"><path d="M14 0 1-8V8ZM0 0-13-8V8Z"/></svg></button>
    </div>
    <button class="btn solo"><svg class="i" viewBox="-20 -20 40 40"><rect x="-7" y="-7" width="14" height="14"/></svg></button>
    <button class="btn solo"><svg class="i" viewBox="-20 -20 40 40"><path d="M-11-6.500H11M-11 0H11M-11 6.500H11" stroke="#555" stroke-width="2.200"/></svg></button>
    <div class="seek"><i class="played"></i><i class="knob"></i></div>
    <span class="time">05:07</span>
    <svg class="volume" viewBox="2646 1616 144 48"><path d="M2646 1635.500H2650L2656 1630V1649L2650 1643.500H2646Z"/><path d="M2664 1640H2756" stroke="#999" stroke-width="4" stroke-linecap="round"/><path d="M2733 1629V1652" stroke="#666" stroke-width="1.600"/><circle cx="2720" cy="1641" r="10.500" fill="#f6f6f6" stroke="#aaa"/><path d="M2764 1636H2768L2774 1631V1651L2768 1645H2764Z"/><path d="M2777 1637V1645M2781 1634V1648M2785 1631V1651" stroke="#555" stroke-width="2"/></svg>
    <button class="btn solo full"><svg class="i" viewBox="-20 -20 40 40"><path d="M1-3 5-7 2-11H12V-1L9-4 5 0ZM-1 3-5 7-2 11H-12V1L-9 4-5 0Z"/></svg></button>
  </div>
</main>

<div class="dock">
  <div class="d on"><svg viewBox="-36 -36 72 72"><rect x="-36" y="-36" width="72" height="72" rx="17" fill="url(#gSilver)"/><path clip-path="url(#cSq)" d="M-36-36H4Q-5-12-5 6H3Q4 24 9 36H-36Z" fill="url(#gBlue)"/><path d="M-17-15V-9M17-15V-9" stroke="#1b2533" stroke-width="3.500" stroke-linecap="round"/><path d="M-22 12Q0 32 22 12" stroke="#1b2533" stroke-width="2.800" fill="none" stroke-linecap="round"/></svg></div>
  <div class="d"><svg viewBox="-36 -36 72 72"><rect x="-36" y="-36" width="72" height="72" rx="17" fill="#cdd0d8"/><rect x="-25" y="-24.500" width="14" height="13.500" rx="3" fill="#6edb50"/><rect x="-7" y="-24.500" width="14" height="13.500" rx="3" fill="#f5bd42"/><rect x="11" y="-24.500" width="14" height="13.500" rx="3" fill="#ee9a36"/><rect x="-25" y="-7" width="14" height="13.500" rx="3" fill="#d4302a"/><rect x="-7" y="-7" width="14" height="13.500" rx="3" fill="#969ea3"/><rect x="11" y="-7" width="14" height="13.500" rx="3" fill="#ec4f61"/><rect x="-25" y="11" width="14" height="13.500" rx="3" fill="#9746d6"/><rect x="-7" y="11" width="14" height="13.500" rx="3" fill="#2f98f3"/><rect x="11" y="11" width="14" height="13.500" rx="3" fill="#63cfaa"/></svg></div>
  <div class="d"><svg viewBox="-36 -36 72 72"><rect x="-36" y="-36" width="72" height="72" rx="17" fill="url(#gWhite)"/><circle r="31" fill="url(#gSafari)"/><circle r="27.500" fill="none" stroke="#dcecfb" stroke-width="4" stroke-dasharray=".9 1.980"/><path d="M22-19 3.500 3.500-3.500-3.500Z" fill="#e8392f"/><path d="M-22 19-3.500-3.500 3.500 3.500Z" fill="#f4f4f4"/></svg></div>
  <div class="d on"><svg viewBox="-36 -36 72 72"><rect x="-36" y="-36" width="72" height="72" rx="17" fill="url(#gWhite)"/><use href="#chrome"/></svg></div>
  <div class="d"><svg viewBox="-36 -36 72 72"><rect x="-36" y="-36" width="72" height="72" rx="17" fill="url(#gMail)"/><rect x="-25" y="-16" width="50" height="32" rx="3" fill="#efeff0"/><path d="M-25 14-8-1M25 14 8-1M-25-14-5 5Q0 9 5 5L25-14" fill="none" stroke="#888" stroke-width="1.500"/></svg></div>
  <div class="d"><svg viewBox="-36 -36 72 72"><rect x="-36" y="-36" width="72" height="72" rx="17" fill="url(#gGreen)"/><rect x="-26" y="-16" width="35" height="32" rx="8" fill="url(#gWhite)"/><path d="M12-5 22-13Q25-15 25-11V11Q25 15 22 13L12 6Z" fill="url(#gWhite)"/></svg></div>
  <div class="d"><svg viewBox="-36 -36 72 72"><rect x="-36" y="-36" width="72" height="72" rx="17" fill="url(#gGreen)"/><path d="M0-24C15-24 27-15 27-2S15 20 0 20Q-5 20-9 19-12 23-17 24-14 20-15 16C-22 12-27 5-27-2-27-15-15-24 0-24Z" fill="#e9f3e6"/></svg></div>
  <div class="d"><svg viewBox="-36 -36 72 72"><g clip-path="url(#cSq)"><rect x="-36" y="-36" width="72" height="72" fill="#f0eee4"/><path d="M6-36H36V0Q8-6 6-36Z" fill="#a4e37c"/><path d="M-3-36Q-1 0 36 8" fill="none" stroke="#fff" stroke-width="11"/><path d="M-36-26-26-14V36H-36Z" fill="#f4b9c2"/><path d="M-36-20 36 42" stroke="#f8cd4a" stroke-width="13"/><path d="M-18 0V36" stroke="#fff" stroke-width="13"/><path d="M-18-36V2" stroke="#fff" stroke-width="13"/><path d="M-18-36V2" stroke="#2b78e4" stroke-width="8"/></g><circle cx="-18" cy="7" r="12" fill="#fff"/><circle cx="-18" cy="7" r="8" fill="#2b78e4"/><path d="M7 13Q18 6 29 13 33 28 18 33 3 28 7 13Z" fill="#2e6fd0" stroke="#fff" stroke-width="1.500"/><path d="M7 15Q18 10 29 15V12Q18 7 7 12Z" fill="#d8392e"/><text x="18" y="26" class="t-280">280</text></svg></div>
  <div class="d"><svg viewBox="-36 -36 72 72"><rect x="-36" y="-36" width="72" height="72" rx="17" fill="#fcfcfc"/><g opacity=".85"><rect x="-9" y="-32" width="18" height="29" rx="9" fill="#f5983a"/><rect x="-9" y="-32" width="18" height="29" rx="9" fill="#f2d838" transform="rotate(45)"/><rect x="-9" y="-32" width="18" height="29" rx="9" fill="#a9cd4c" transform="rotate(90)"/><rect x="-9" y="-32" width="18" height="29" rx="9" fill="#64bd83" transform="rotate(135)"/><rect x="-9" y="-32" width="18" height="29" rx="9" fill="#5aa6dc" transform="rotate(180)"/><rect x="-9" y="-32" width="18" height="29" rx="9" fill="#8579c2" transform="rotate(225)"/><rect x="-9" y="-32" width="18" height="29" rx="9" fill="#c25f9a" transform="rotate(270)"/><rect x="-9" y="-32" width="18" height="29" rx="9" fill="#ee5747" transform="rotate(315)"/></g></svg></div>
  <div class="d"><svg viewBox="-36 -36 72 72"><path d="M30-26H34Q39-26 39-20V-10H30Z" fill="#d9d9d9"/><path d="M30-10H39V4H30Z" fill="#5ab4ea"/><path d="M30 4H39V15H30Z" fill="#ef9137"/><path d="M30 15H39V22Q39 27 34 27H30Z" fill="#63cf5b"/><rect x="-36" y="-36" width="71" height="72" rx="17" fill="url(#gBrown)"/><circle cx="1" r="22" fill="none" stroke="#7f5f33" stroke-width="1.500"/><circle cx="1" cy="-6" r="8" fill="#8a6839"/><path d="M-14 14Q-9 7 1 7T16 14Q9 22 1 22T-14 14Z" fill="#8a6839"/></svg></div>
  <div class="d"><svg viewBox="-36 -36 72 72"><rect x="-36" y="-36" width="72" height="72" rx="17" fill="#fafafa"/><path clip-path="url(#cSq)" d="M-36-36H36V-14H-36Z" fill="#e2594e"/><text x="-1" y="-18.500" class="t-apr2">APR</text><text y="26" class="t-27">27</text><circle cx="30" cy="-28" r="17" fill="#e65245"/><text x="29" y="-21" class="t-badge">1</text></svg></div>
  <div class="d"><svg viewBox="-36 -36 72 72"><rect x="-36" y="-36" width="72" height="72" rx="17" fill="#fbfbfb"/><path d="M-10-18H27M-10 0H27M-10 18H27" stroke="#c2c2c2" stroke-width="2"/><g fill="#3478f0"><circle cx="-22" cy="-18" r="4"/><circle cx="-22" cy="-18" r="6" fill="none" stroke="#3478f0" stroke-width="1.500"/></g><g fill="#e4443a"><circle cx="-22" r="4"/><circle cx="-22" r="6" fill="none" stroke="#e4443a" stroke-width="1.500"/></g><g fill="#ee9634"><circle cx="-22" cy="18" r="4"/><circle cx="-22" cy="18" r="6" fill="none" stroke="#ee9634" stroke-width="1.500"/></g><circle cx="30" cy="-28" r="17" fill="#e65245"/><text x="30" y="-20.500" class="t-badge">42</text></svg></div>
  <div class="d"><svg viewBox="-36 -36 72 72"><rect x="-36" y="-36" width="72" height="72" rx="17" fill="#f1f0ed"/><path clip-path="url(#cSq)" d="M-36-36H36V-18H-36Z" fill="url(#gNotes)"/><path d="M-36-15H36" stroke="#b5b3ae" stroke-width="1.500" stroke-dasharray="1.500 1.500"/><path d="M-36 0H36M-36 18H36" stroke="#d4d2ce" stroke-width="1.500"/></svg></div>
  <div class="d"><svg viewBox="-36 -36 72 72"><rect x="-36" y="-36" width="72" height="72" rx="17" fill="url(#gMusic)"/><path d="M-10-18 17-25V9M-10-18V15M-10-11 17-18" fill="none" stroke="#fff" stroke-width="4.500"/><ellipse cx="-15" cy="16" rx="7.500" ry="7" fill="#fff"/><ellipse cx="12" cy="11" rx="7.500" ry="7" fill="#fff"/></svg></div>
  <div class="d"><svg viewBox="-36 -36 72 72"><rect x="-36" y="-36" width="72" height="72" rx="17" fill="url(#gPod)"/><path d="M-12 17A23.500 23.500 0 1 1 12 17M-9 8A14.500 14.500 0 1 1 9 8" fill="none" stroke="#fff" stroke-width="3.200"/><circle cy="-4" r="6" fill="#fff"/><path d="M-6 11Q-6 5 0 5T6 11L4 24Q0 31-4 24Z" fill="#fff"/></svg></div>
  <div class="d"><svg viewBox="-36 -36 72 72"><rect x="-36" y="-36" width="72" height="72" rx="17" fill="url(#gTv)"/><use href="#apple" fill="#fff" transform="translate(-28 -14) scale(1.050)"/><text x="11" y="11" class="t-tv">tv</text></svg></div>
  <div class="d"><svg viewBox="-36 -36 72 72"><rect x="-36" y="-36" width="72" height="72" rx="17" fill="#fff"/><path clip-path="url(#cSq)" d="M-36-24H36M-36-11H36M-36 2H36M-36 15H36M-36 28H36M-24-36V36M-12-36V36M0-36V36M12-36V36M24-36V36" stroke="#d3efd0"/><path d="M-23 2H-13V26H-23Z" fill="#cf3543"/><path d="M-11-12H-1V26H-11Z" fill="#ef9434"/><path d="M1-27H11V26H1Z" fill="#62d04e"/><path d="M13-19H23V26H13Z" fill="#2f82ec"/></svg></div>
  <div class="d"><svg viewBox="-36 -36 72 72"><rect x="-36" y="-36" width="72" height="72" rx="17" fill="#fff"/><path clip-path="url(#cSq)" d="M-18 2H-4V18H-18ZM4 2H18V18H4ZM-36 2H-22V18H-36ZM22 2H36V18H22ZM-18 24H-4V36M18 24H4V36M-18-36V-30M18-36V-30" fill="none" stroke="#c8e0f6" stroke-width="1.500"/><path d="M-18-28H18L22-6H-22Z" fill="#2c82de"/><path d="M-14-24H14L16-9H-16Z" fill="#eaf4fd"/><circle cy="-17" r="7" fill="#6bbf58"/><path d="M0-17V-24A7 7 0 0 1 6-13Z" fill="#ef8836"/><path d="M0-17V-24A7 7 0 0 0-6-13Z" fill="#4c6fd8"/><path d="M0-5V27" stroke="#92a0b0" stroke-width="4"/><path d="M-11 27H11" stroke="#555e6a" stroke-width="3"/></svg></div>
  <div class="d"><svg viewBox="-36 -36 72 72"><rect x="-36" y="-36" width="72" height="72" rx="17" fill="#fefdfa"/><path d="M0-31H32M-34-10H34M-34-3H34M-34 9H34M-34 16H34M-34 24H34" stroke="#f7dfbd" stroke-width="1.500"/><text x="-20" y="14" class="t-quote">“</text><path d="M15-29Q18-33 22-29L6 10 0 8Z" fill="url(#gPen)"/><path d="M-1 6 6 9-5 22-15 30-11 18Z" fill="#3d4246"/></svg></div>
  <div class="d"><svg viewBox="-36 -36 72 72"><rect x="-36" y="-36" width="72" height="72" rx="17" fill="url(#gStore)"/><path d="M4-20-14 13M-4-20 18 20M-24 9H6M16 9H24M-18 18-17 16" stroke="#fff" stroke-width="5.500" stroke-linecap="round"/><circle cx="30" cy="-28" r="17" fill="#e65245"/><text x="30" y="-20.500" class="t-badge">8</text></svg></div>
  <div class="d"><svg viewBox="-36 -36 72 72"><rect x="-36" y="-36" width="72" height="72" rx="17" fill="url(#gPref)"/><circle r="30" fill="#3a3a3a"/><circle r="30.500" fill="none" stroke="#2a2a2a" stroke-width="2.500" stroke-dasharray="2 1.800"/><circle r="26" fill="none" stroke="#8f8f8f" stroke-width="3"/><circle r="20.500" fill="none" stroke="#6e6e6e" stroke-width="3.500"/><path d="M0 0H26M0 0-13-22.500M0 0-13 22.500" stroke="#a8a8a8" stroke-width="3.500"/><circle r="5" fill="#777" stroke="#333" stroke-width="2"/></svg></div>
  <div class="d on"><svg viewBox="-36 -36 72 72"><rect x="-36" y="-36" width="72" height="72" rx="17" fill="#fff"/><path d="M12-25-26 8-20 14 12-8Z" fill="#2767a8"/><path d="M12 25-26-8-20-14 12 8Z" fill="#2f7fcb"/><path d="M12-25 25-19V19L12 25Z" fill="#4097e8"/></svg></div>
  <i class="sep"></i>
  <div class="d on"><svg viewBox="-36 -36 72 72"><rect x="-34" y="-35" width="68" height="70" rx="15" fill="#0a0a0a" stroke="#c5d3dc" stroke-width="2.500"/><rect x="-28" y="-28" width="56" height="56" rx="9" fill="#262626"/><path d="M-23-23-16-17.500-23-12M-11-9H0" fill="none" stroke="#fff" stroke-width="2.800"/></svg></div>
  <div class="d on"><svg viewBox="-36 -36 72 72"><circle cx="-14" cy="-15" r="20" fill="#3795dd"/><circle cx="14" cy="15" r="20" fill="#2d6fc0"/><circle r="34" fill="url(#gSky)"/><text y="18" class="t-skype big">S</text></svg></div>
  <div class="d on"><svg viewBox="-36 -36 72 72"><path d="M-27 12H27L36 42H-36Z" fill="#f08f2d"/><path d="M-5-38Q0-41 5-38L23 18Q0 38-23 18Z" fill="#ef8329"/><path d="M-9-27H9L14-12Q0-5-14-12ZM-17 4Q0 13 17 4L21 18Q0 28-21 18Z" fill="#ececee"/></svg></div>
  <i class="sep narrow"></i>
  <div class="d"><svg viewBox="-36 -36 72 72"><rect x="-34" y="-32" width="68" height="56" rx="6" fill="#67b9ee"/><path d="M-30-39H30V-32H-30Z" fill="#1c1c1e"/><path d="M-27-31H8L27-12V41H-27Z" fill="#f7f7f7"/><path d="M8-31V-12H27Z" fill="#dcdcdc"/><path d="M0-32V8" stroke="#555" stroke-width="7"/><path d="M0-32V8" stroke="#aaa" stroke-width="3" stroke-dasharray="2 2"/><text y="36" class="t-zip">ZIP</text></svg></div>
  <div class="d"><svg viewBox="-36 -36 72 72"><use href="#bin" transform="translate(0 -1) scale(1.050 1.040)"/></svg></div>
</div>
</body>
</html>
```
FILE: styles.css
```css
* { box-sizing: border-box; }
html, body { margin: 0; }
body {
  width: 2880px;
  height: 1800px;
  overflow: hidden;
  display: flex;
  flex-direction: column;
  font-family: Inter, "Liberation Sans", sans-serif;
  color: #1c2130;
  background: linear-gradient(90deg, #50576b, #6c7084 45%, #62667b 75%, #3f455a);
}
p, h2 { margin: 0; font-weight: 400; }
button { border: 0; padding: 0; font: inherit; }
svg { display: block; overflow: visible; }
svg text { text-anchor: middle; }
.defs { position: absolute; width: 0; height: 0; }
.i { width: 40px; height: 40px; flex: none; color: #2b3347; fill: #1c2130; }
.i-wide { width: 52px; }

/* system menu bar */
.menubar {
  flex: none;
  height: 49px;
  display: flex;
  justify-content: space-between;
  padding-bottom: 2px;
  background: linear-gradient(90deg, #c5d1eb, #bdcbe7 50%, #aebfe1);
  font-size: 25.200px;
  white-space: nowrap;
}
.menubar-left {
  display: grid;
  align-items: center;
  grid-template-columns: 72px 94px 83px 89px 99px 150px 111px 110px 148px 138px 80px;
  padding-left: 43px;
}
.apple-logo { width: 30px; height: 30px; margin-top: -5px; fill: #1c1f24; }
.menubar-right {
  display: grid;
  align-items: center;
  grid-template-columns: 66px 65.5px 67px 67.5px 86px 67px 65px 62px 67px 288px;
}
.clock { font-size: 25.700px; }

/* player window */
.player {
  flex: none;
  margin-top: 1px;
  height: 1626px;
  display: flex;
  flex-direction: column;
  border-radius: 18px 18px 22px 22px;
  overflow: hidden;
  background: #f1f1f1;
  box-shadow: 0 0 0 1px #1a1d25, 0 14px 30px rgba(0, 0, 0, .45);
}
.titlebar { flex: none; height: 56px; display: grid; grid-template-columns: 1278px auto; align-items: center; padding-bottom: 1px; background: #f1f1f1; }
.lights { display: flex; gap: 16px; padding-left: 16px; }
.lights i { width: 24px; height: 24px; border-radius: 50%; }
.lights .red { background: #ed6a5e; }
.lights .yellow { background: #f5bf4f; }
.lights .green { background: #61c554; }
.title { display: flex; align-items: center; justify-self: start; margin-left: -12px; margin-bottom: 2px; gap: 12px; font-size: 27px; letter-spacing: .07px; font-weight: 600; color: #404040; }
.file-icon { width: 24px; height: 30px; }

.stage { flex: none; height: 1498px; padding-left: 242px; background: #000; }
.video { width: 2395px; height: 1498px; display: flex; flex-direction: column; overflow: hidden; }
.mac-bar {
  flex: none;
  height: 38px;
  display: flex;
  align-items: center;
  padding-bottom: 1px;
  background: #b3dbf5;
  border-top: 2px solid #8fb4ce;
  border-bottom: 2px solid #14283a;
  font-size: 22.400px;
  color: #12293a;
  white-space: nowrap;
}
.mac-menus { display: grid; align-items: center; width: 1217px; padding-left: 33px; grid-template-columns: 57px 109px 69px 73px 82px 109px 150px 88px 116px 60px; }
.mac-apple { width: 25px; height: 25px; fill: #0c2231; }
.mac-status {
  display: grid;
  align-items: center;
  grid-template-columns: 49px 116px 41px 74px 45px 43px 38px 46px 49px 50px 55px 43px 65px 48px 76px 164px 55px 48px 40px;
}
.mac-status .ink { color: #173044; }
.rec { font-size: 24.200px; }
.pct { font-size: 19.500px; }
.mac-clock { font-size: 23.200px; }

.desk { flex: 1; display: flex; }
.side {
  flex: none;
  position: relative;
  width: 90px;
  padding-top: 91px;
  background: linear-gradient(180deg, #4f94d3, #2c6ba8 90px, #294a70 300px, #06233f 1350px, #031d38);
}
.back-window {
  position: absolute;
  left: 36px; top: 1px; right: 0; bottom: 1px;
  background: radial-gradient(circle at 21px 18px, #dadada 10px, transparent 11px), radial-gradient(circle at 54px 18px, #dadada 10px, transparent 11px), #1e2132;
  border-radius: 10px 0 0 10px;
}
.side-dock {
  position: relative;
  height: 1277px;
  padding-top: 6px;
  border-radius: 0 8px 8px 0;
  border-right: 1px solid #8291ad;
  background: linear-gradient(90deg, rgba(70, 120, 190, .25), rgba(70, 80, 110, .25)), linear-gradient(180deg, #6c98c8, #6d8ba8 16%, #5d7499 32%, #536a91 60%, #4b6283 80%, #54688a);
}
.app { height: 74.900px; display: flex; align-items: center; padding-left: 11px; position: relative; }
.app svg { width: 72px; height: 72px; }
.app.on::before { content: ""; position: absolute; left: 4px; top: 34px; width: 7px; height: 7px; border-radius: 50%; background: #061733; }
.side-dock .rule { height: 2px; width: 67px; margin: 16px 0 15px 11px; background: #263c61; }

/* browser */
.browser { flex: none; width: 2305px; display: flex; flex-direction: column; border-radius: 10px 10px 0 0; overflow: hidden; background: #fbfbfc; }
.tabs { flex: none; height: 55px; display: flex; background: linear-gradient(180deg, #6a6c6d, #575858); }
.tabs .lights { flex: none; width: 176px; padding-left: 22px; gap: 13px; align-items: center; border-right: 1px solid #8c8d8e; }
.tabs .lights i { width: 20px; height: 20px; }
.lights.small .red { background: #f2564a; }
.lights.small .yellow { background: #f9b32f; }
.lights.small .green { background: #4fb52f; }
.pin { position: relative; flex: none; width: 68.300px; display: flex; align-items: center; justify-content: center; border-right: 1px solid #8c8d8e; }
.pin::after, .tab::after { content: ""; position: absolute; bottom: 4px; height: 4px; }
.pin::after { left: 21px; width: 27px; }
.pin.teal::after { background: #4aa68f; }
.pin.amber::after, .tab::after { background: #f49a35; }
.pin.pink::after { background: #ea6cc4; }
.pin.spark::before { content: ""; position: absolute; left: 27px; bottom: -1px; width: 14px; height: 14px; border-radius: 50%; background: radial-gradient(#5fe6fb 30%, transparent 72%); }
.tab { position: relative; flex: none; width: 356.500px; display: grid; grid-template-columns: 43px 1fr 50px; align-items: center; padding-left: 8px; font-size: 18.300px; color: #c9cacb; white-space: nowrap; }
.tab::after { left: 34px; right: 38px; }
.tab .x { fill: none; stroke: #b8b9ba; stroke-width: 2.600; }
.tab.current { background: #fafafb; color: #141416; border-top: 4px solid #3c84dd; padding-bottom: 4px; }
.tab.current .x { stroke: #4a4a4c; }
.tab-tools { flex: 1; display: flex; gap: 13px; align-items: center; padding-left: 6px; border-left: 1px solid #8c8d8e; }
.tab-tools .i { fill: none; stroke: #c4c5c6; stroke-width: 2.600; }

.toolbar { flex: none; height: 68px; display: flex; align-items: center; padding-top: 2px; background: #f9f9fb; border-bottom: 2px solid #c3c6ca; }
.nav-buttons { flex: none; width: 318px; display: grid; grid-template-columns: 54px 54px 60px; padding-left: 3px; }
.nb { width: 60px; height: 60px; }
.ln { fill: none; stroke: #46464a; stroke-width: 3.200; }
.ln.dim { stroke: #b4b4b6; }
.urlbar { flex: none; width: 1287px; height: 50px; display: flex; align-items: center; border: 2px solid #c9c9cb; border-radius: 5px; background: #fff; font-size: 22px; color: #6b6b6e; white-space: nowrap; }
.shield { margin-left: 2px; margin-right: 3px; }
.lock { border-left: 1px solid #d5d5d7; width: 49px; padding-left: 4px; }
.url { flex: none; width: 906px; overflow: hidden; letter-spacing: .180px; -webkit-mask-image: linear-gradient(90deg, #000 95%, rgba(0, 0, 0, .25)); mask-image: linear-gradient(90deg, #000 95%, rgba(0, 0, 0, .25)); }
.url em { font-style: normal; color: #111; }
.container-name { width: 66px; margin-left: 17px; font-weight: 600; font-size: 21.500px; color: #f79a3a; }
.container-dot { width: 27px; height: 27px; border-radius: 50%; background: #f99a35; }
.url-tools { margin-left: 20px; padding-left: 13px; height: 36px; align-items: center; border-left: 1px solid #d0d0d2; display: grid; grid-template-columns: 47px 47px 40px; }
.url-tools .i { fill: #4a4a4c; }
.extensions { display: grid; align-items: center; padding-left: 155px; grid-template-columns: 54px 52px 54px 54px 52px 53px 54px 53px 52px 16px 40px; }
.vr { width: 2px; height: 56px; background: #b9babc; }

.page { flex: 1; display: flex; min-height: 0; font-family: "Liberation Sans", Arial, sans-serif; }
.page-main { flex: none; width: 2281px; display: flex; flex-direction: column; }
.scroll { flex: 1; background: #fbfbfb; border-left: 2px solid #ececec; padding: 523px 4px 0 5px; border-radius: 0 0 8px 0; }
.scroll i { display: block; height: 404px; border-radius: 7px; background: #bbb; }
.aws-nav { position: relative; flex: none; height: 68px; display: flex; align-items: center; padding-top: 2px; background: #212b37; color: #d9dcdf; font-size: 20.500px; white-space: nowrap; }
.aws-logo { flex: none; width: 173px; padding-left: 60px; font-family: "Open Sans", sans-serif; font-weight: 600; font-size: 28px; line-height: 24px; color: #f3f4f5; margin-top: -11px; }
.aws-logo span { display: block; padding-left: 1px; height: 25px; letter-spacing: .3px; }
.aws-logo svg { width: 56px; height: 14px; }
.tri { flex: none; width: 0; height: 0; border: 8px solid transparent; border-top: 12px solid #d9dcdf; border-bottom: 0; }
.services { width: 101px; font-size: 23px; }
.aws-search { flex: none; width: 898px; height: 49px; margin-left: 173px; margin-top: -1px; display: flex; align-items: center; background: #1a1f26; border: 2px solid #6d747b; padding-left: 10px; }
.aws-search .i { color: #d9dcdf; }
.ph { width: 710px; margin-left: 7px; font-style: italic; font-size: 23px; letter-spacing: .190px; color: #9aa0a6; }
.kbd { font-size: 23px; color: #9aa0a6; }
.bell { margin-left: 153px; margin-right: 23px; }
.account { width: 314px; letter-spacing: -.320px; }
.region { width: 113px; margin-left: 42px; letter-spacing: -.100px; }
.support { width: 85px; margin-left: 41px; }
.paused { position: absolute; left: 2019px; top: 6px; bottom: 0; display: flex; gap: 41px; }
.paused i { width: 39px; background: rgba(200, 205, 215, .28); }

.content {
  position: relative;
  flex: none;
  height: 1209px;
  overflow: hidden;
  padding-left: 642px;
  background: linear-gradient(90deg, #eee, #f6f6f6 18px, #fefefe 40px, #fefefe);
}
.form { height: 1230px; padding-left: 49px; border-left: 2px solid #e6e6e6; width: 1466px; font-size: 23.700px; color: #404040; white-space: nowrap; }
.field { display: grid; grid-template-columns: 454px 460px; column-gap: 24px; align-items: center; }
.field label { text-align: right; font-weight: 700; letter-spacing: -.100px; }
.first label { letter-spacing: -.350px; }
.second label { letter-spacing: -.250px; }
.select { height: 54px; display: flex; align-items: center; justify-content: space-between; border: 2px solid #cfcfcf; border-radius: 5px; padding: 0 16px; background: #fff; letter-spacing: -.300px; }
.caret { border: 9px solid transparent; border-top: 10px solid #3a3a3a; border-bottom: 0; }
.first .select { height: 52px; border-top: 0; }
.hint { padding-left: 478px; margin-top: 13px; line-height: 28px; font-size: 20.300px; letter-spacing: -.150px; color: #5c5c5c; }
.second { margin-top: 39px; }
.alloc-title { font-weight: 700; line-height: 30px; margin-top: 22px; letter-spacing: -.200px; }
.alloc-title.inset { padding-left: 13px; line-height: 26px; margin-top: 0; }
.alloc { width: 1421px; height: 58px; margin-top: 12px; padding: 4px 4px 3px; background: #e9e9e9; border: 3px solid #1c1c1c; border-top: 0; }
.alloc div { height: 48px; background: repeating-linear-gradient(123deg, #fff 0, #fff 5.200px, #3c3c3c 5.800px, #3c3c3c 25px, #fff 25.600px); }
.alloc-legend { height: 28px; line-height: 28px; margin-top: 4px; width: 1414px; display: flex; justify-content: space-between; letter-spacing: -.100px; }
.form h2 { width: 1414px; font-size: 30px; line-height: 36px; border-bottom: 2px solid #d0d0d0; }
.defs-title { margin-top: 21px; height: 46px; display: flex; justify-content: space-between; }
.help { width: 24px; height: 24px; margin: 2px 3px 0 0; }
.add { margin-top: 17px; width: 206px; height: 52px; border-radius: 4px; border: 1px solid #15509e; background: linear-gradient(180deg, #2f81e3, #1c5fb4); color: #fff; font-weight: 700; letter-spacing: -.100px; text-shadow: 0 2px 1px rgba(0, 0, 0, .5); display: block; }
.table { width: 1414px; margin-top: 16px; border-bottom: 2px solid #d3dae2; }
.thead { height: 69px; display: grid; grid-template-columns: 306px 305px 304px 166px 167px 166px; align-items: stretch; line-height: 67px; font-weight: 700; background: linear-gradient(180deg, #ededed, #dcdcdc); border-top: 2px solid #cfcfcf; }
.thead span { padding-left: 14px; border-right: 2px solid #c9c9c9; box-shadow: 1px 0 0 #fff; }
.thead span:first-child { padding-left: 13px; }
.empty { height: 53px; line-height: 56px; text-align: center; background: #eff6fe; }
.form .service-title { margin-top: 49px; height: 43px; line-height: 33px; }
.copy { margin-top: 10px; line-height: 35.400px; letter-spacing: -.030px; }
.copy .lead { letter-spacing: -.060px; }
.copy a { color: #2566b2; }
.mesh { margin-top: 56px; height: 28px; }
.mesh label { letter-spacing: -.140px; }
.checkbox { width: 27px; height: 27px; border: 2px solid #cfcfcf; border-radius: 6px; background: #fff; }
.form .proxy-title { margin-top: 79px; border: 0; }
.ink-note { position: absolute; left: 588px; top: 455px; width: 440px; height: 240px; }

.aws-foot { flex: none; height: 60px; display: flex; align-items: center; padding-top: 1px; background: #212b37; color: #dcdfe1; font-size: 20.200px; white-space: nowrap; padding-left: 33px; border-top: 2px solid #5b636c; }
.f1 { width: 130px; }
.f2 { width: 120px; }
.f3 { margin-left: 769px; width: 681px; font-size: 18.430px; color: #a9afb5; }
.f4 { width: 166px; }
.f5 { width: 159px; }
.f6 { padding-top: 2px; }

/* transport controls */
.controls { flex: none; height: 72px; display: flex; align-items: flex-start; padding: 11px 16px 0; background: linear-gradient(180deg, #e4e4e4, #bcbcbc); border-top: 2px solid #a3a3a3; }
.btn-group { display: flex; width: 170px; margin-right: 8px; border-radius: 8px; overflow: hidden; box-shadow: 0 2px 0 #a0a0a0; }
.btn { flex: 1; height: 44px; display: flex; align-items: center; justify-content: center; background: linear-gradient(180deg, #fdfdfd, #f0f0f0); border-right: 2px solid #d0d0d0; }
.btn:last-child { border-right: 0; }
.btn .i { fill: #4f4f4f; margin-top: -2px; }
.btn.solo { flex: none; width: 57px; margin-right: 9px; border: 0; border-radius: 8px; box-shadow: 0 2px 0 #a0a0a0; }
.seek { position: relative; flex: none; width: 2178px; height: 30px; margin: 8px 0 0 7px; border: 2px solid #a2a2a2; border-radius: 6px; background: #b5b5b5; }
.played { display: block; width: 892px; height: 26px; background: #949494; }
.knob { position: absolute; left: 879px; top: 1px; width: 24px; height: 24px; border-radius: 50%; background: #f3f3f3; box-shadow: 0 1px 2px rgba(0, 0, 0, .4); }
.time { width: 98px; margin-left: 38px; font-size: 20.500px; line-height: 46px; font-weight: 600; color: #474747; }
.volume { width: 144px; height: 48px; margin-right: 16px; margin-top: -1px; fill: #555; }
.btn.full { margin-right: 0; }

/* dock */
.dock {
  position: absolute;
  left: 80px; top: 1669px;
  width: 2719px; height: 121px;
  display: flex;
  padding: 18px 0 0 6px;
  border-radius: 32px;
  border: 2px solid rgba(190, 195, 215, .45);
  background: linear-gradient(90deg, #7c8394, #8d91a8 25%, #9498af 45%, #8e90a6 65%, #787f91);
}
.d { position: relative; flex: none; width: 97.050px; padding-left: 11px; }
.d svg { width: 72px; height: 72px; filter: drop-shadow(0 1px 2px rgba(0, 0, 0, .25)); }
.d.on::after { content: ""; position: absolute; left: 43px; top: 89px; width: 8px; height: 8px; border-radius: 50%; background: #0e1426; }
.sep { flex: none; width: 2px; height: 88px; margin: -3px 21px 0 21px; background: #5b6178; }
.sep.narrow { margin: -3px 22px 0 19px; }

/* lettering inside icons */
.t-up { font: 700 15px Inter, sans-serif; fill: #a9cfe6; }
.t-a { font: 500 20px Inter, sans-serif; fill: #b9dcf2; }
.t-apr { font: 13px Inter, sans-serif; fill: #fff; }
.t-25 { font: 31px Inter, sans-serif; fill: #333; }
.t-35 { font: 14px Inter, sans-serif; fill: #fff; }
.t-skype { font: 700 40px Lato, sans-serif; fill: #fff; }
.t-skype.big { font-size: 52px; }
.t-upwork { font: 900 38px Lato, sans-serif; letter-spacing: -1px; fill: #fff; }
.t-m { font: 700 17px Inter, sans-serif; fill: #fff; }
.t-67 { font: 700 15px Inter, sans-serif; fill: #fff; }
.t-help { font: 700 19px "Liberation Sans", sans-serif; fill: #fff; }
.t-280 { font: 700 9px Roboto, sans-serif; fill: #fff; }
.t-apr2 { font: 500 15px Roboto, sans-serif; fill: #fff; }
.t-27 { font: 300 45px Roboto, sans-serif; fill: #222; }
.t-badge { font: 21px Roboto, sans-serif; fill: #fff; }
.t-tv { font: 500 31px Roboto, sans-serif; fill: #fff; }
.t-quote { font: 700 58px "Liberation Serif", serif; fill: #f0a33e; }
.t-zip { font: 13px Roboto, sans-serif; fill: #555; }
```
